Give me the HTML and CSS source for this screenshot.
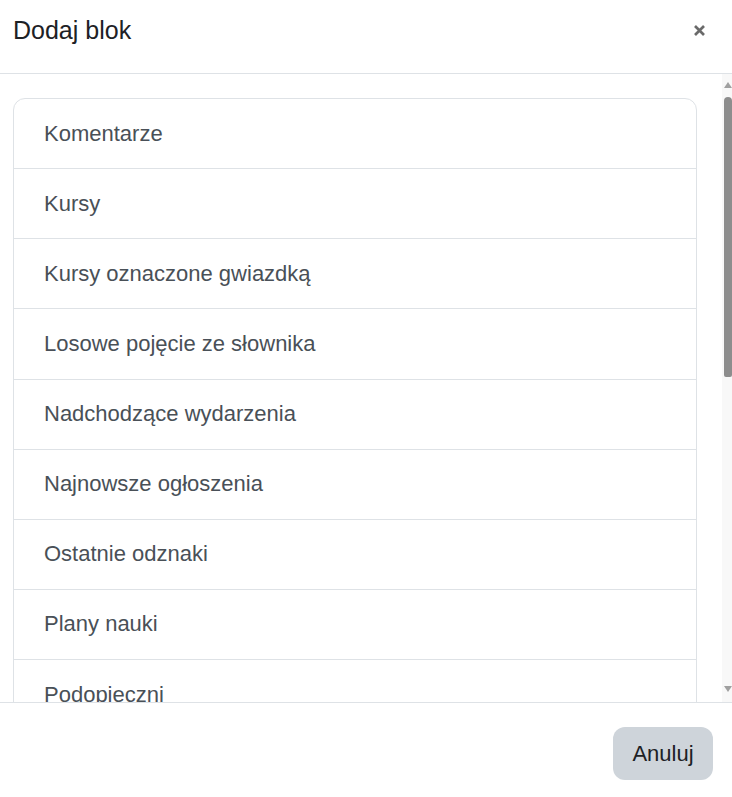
FILE: index.html
```html
<!DOCTYPE html>
<html lang="pl">
<head>
<meta charset="utf-8">
<title>Dodaj blok</title>
<link rel="stylesheet" href="styles.css">
</head>
<body>
<div class="modal">
  <header class="modal-header">
    <h5 class="modal-title">Dodaj blok</h5>
    <button class="close" aria-label="Zamknij">
      <svg width="13" height="13" viewBox="0 0 13 13"><path d="M2 2 L11 11 M11 2 L2 11" stroke="#6a6a6a" stroke-width="2.7" stroke-linecap="butt"/></svg>
    </button>
  </header>
  <div class="modal-body">
    <div class="body-content">
      <div class="list-group">
        <a class="list-item">Komentarze</a>
        <a class="list-item">Kursy</a>
        <a class="list-item">Kursy oznaczone gwiazdką</a>
        <a class="list-item">Losowe pojęcie ze słownika</a>
        <a class="list-item">Nadchodzące wydarzenia</a>
        <a class="list-item">Najnowsze ogłoszenia</a>
        <a class="list-item">Ostatnie odznaki</a>
        <a class="list-item">Plany nauki</a>
        <a class="list-item">Podopieczni</a>
      </div>
    </div>
    <div class="scrollbar">
      <div class="arrow-up"></div>
      <div class="thumb"></div>
      <div class="track-rest"></div>
      <div class="arrow-down"></div>
    </div>
  </div>
  <footer class="modal-footer">
    <button class="btn-secondary">Anuluj</button>
  </footer>
</div>
</body>
</html>
```
FILE: styles.css
```css
html, body {
  margin: 0;
  padding: 0;
  background: #ffffff;
}
body {
  font-family: "Liberation Sans", Arial, sans-serif;
  color: #1d2125;
}
.modal {
  width: 732px;
  height: 797px;
  display: flex;
  flex-direction: column;
  overflow: hidden;
}
.modal-header {
  height: 74px;
  flex: 0 0 74px;
  box-sizing: border-box;
  border-bottom: 1px solid #dee2e6;
  display: flex;
  align-items: flex-start;
  justify-content: space-between;
  padding: 0 26px 0 13px;
}
.modal-title {
  margin: 0;
  padding-top: 15px;
  font-size: 25px;
  font-weight: 400;
  line-height: 30px;
  color: #1d2125;
}
.close {
  background: none;
  border: 0;
  padding: 0;
  margin-top: 24px;
  width: 13px;
  height: 13px;
  display: flex;
}
.modal-body {
  flex: 0 0 629px;
  height: 629px;
  display: flex;
  border-bottom: 1px solid #dee2e6;
  box-sizing: border-box;
}
.body-content {
  flex: 1;
  overflow: hidden;
  padding: 24px 25px 0 13px;
}
.list-group {
  border: 1px solid #dee2e6;
  border-radius: 12px;
  display: flex;
  flex-direction: column;
}
.list-item {
  display: flex;
  align-items: center;
  flex: 0 0 69.125px;
  height: 69.125px;
  padding: 0 30px;
  font-size: 22px;
  color: #495057;
  border-bottom: 1px solid #dee2e6;
}
.scrollbar {
  width: 10px;
  flex: 0 0 10px;
  background: #f8f8f8;
  display: flex;
  flex-direction: column;
  align-items: flex-end;
}
.arrow-up {
  margin-top: 8px;
  width: 0;
  height: 0;
  border-left: 4px solid transparent;
  border-right: 4px solid transparent;
  border-bottom: 6px solid #a0a0a0;
}
.thumb {
  margin-top: 9px;
  width: 8px;
  height: 280px;
  background: #8d8d8d;
  border-radius: 4px 4px 2px 2px;
}
.track-rest {
  flex: 1;
}
.arrow-down {
  margin-bottom: 10px;
  width: 0;
  height: 0;
  border-left: 4px solid transparent;
  border-right: 4px solid transparent;
  border-top: 6px solid #a0a0a0;
}
.modal-footer {
  flex: 1;
  display: flex;
  justify-content: flex-end;
  align-items: flex-start;
  padding: 24px 19px 0 0;
}
.btn-secondary {
  width: 100px;
  height: 53px;
  border: 0;
  border-radius: 12px;
  background: #ced4da;
  color: #1d2125;
  font-family: "Liberation Sans", Arial, sans-serif;
  font-size: 22px;
  padding: 0;
}
```
